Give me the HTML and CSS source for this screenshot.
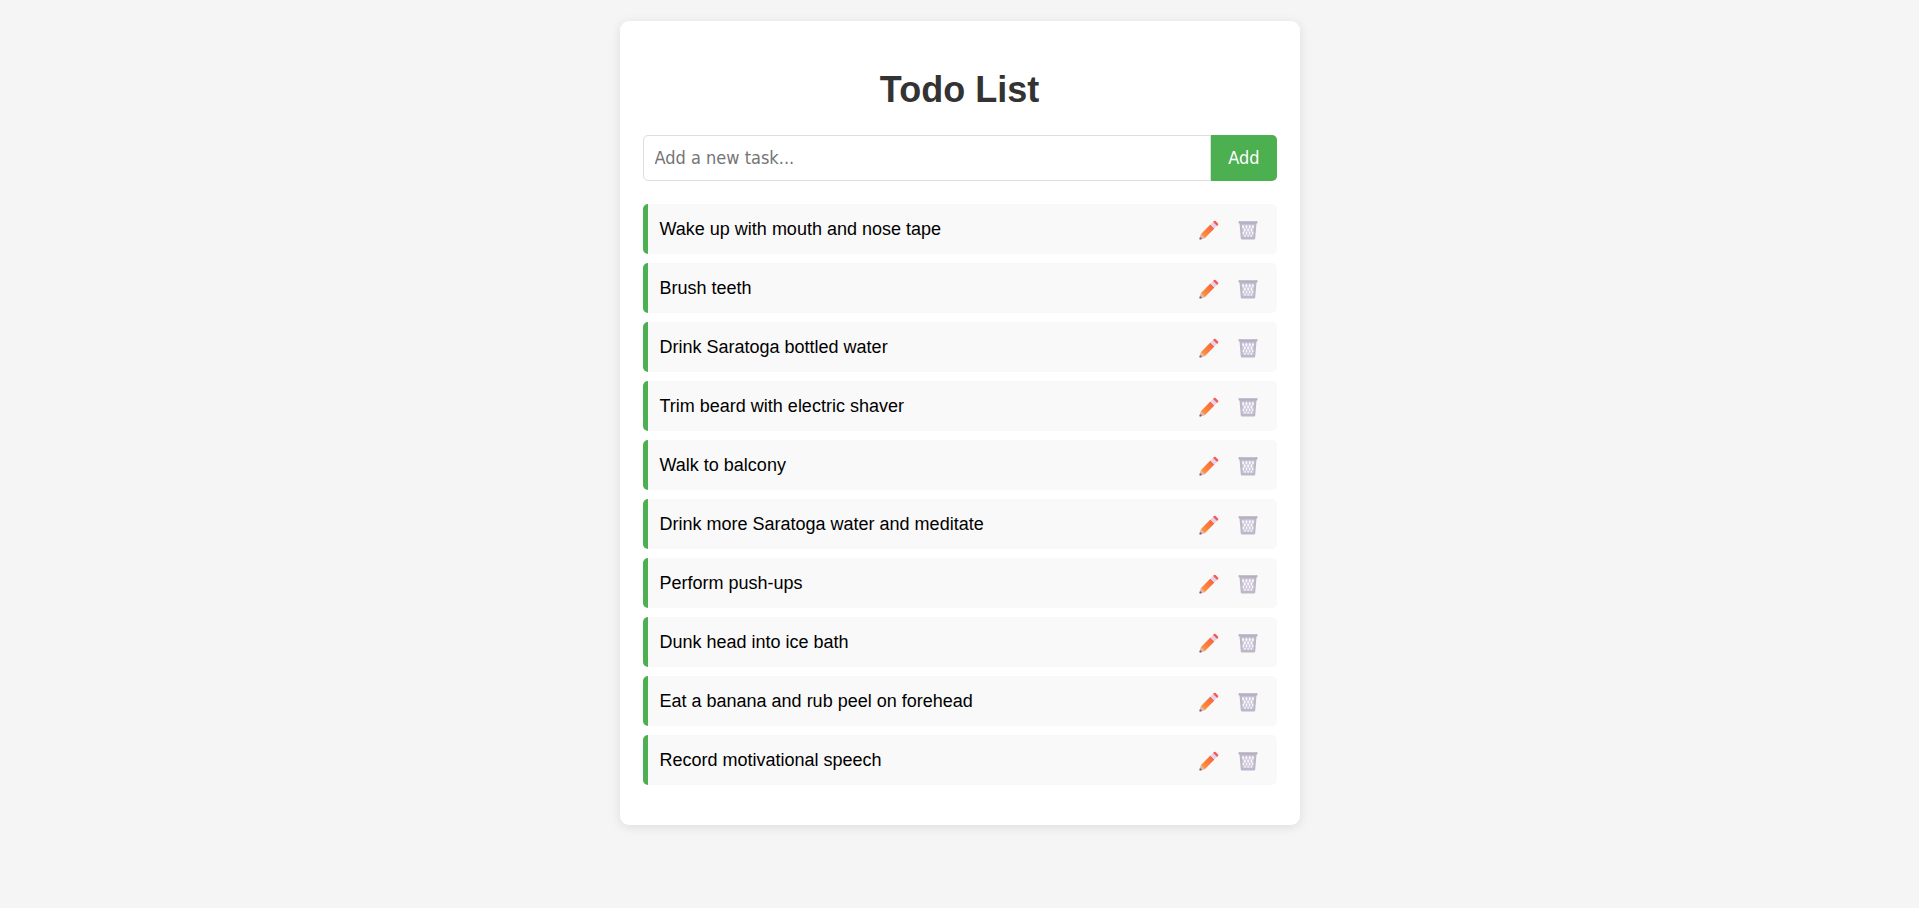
FILE: index.html
```
<!DOCTYPE html>
<html lang="en">
<head>
<meta charset="utf-8">
<meta name="viewport" content="width=device-width, initial-scale=1">
<title>Todo List</title>
<link rel="stylesheet" href="styles.css">
</head>
<body>
<svg class="sprite" aria-hidden="true">
  <defs>
    <linearGradient id="wood" x1="1" y1="0" x2="0" y2="1">
      <stop offset="0.1" stop-color="#f9633c"/>
      <stop offset="0.5" stop-color="#fa7c3a"/>
      <stop offset="0.9" stop-color="#ff963e"/>
    </linearGradient>
  </defs>
  <symbol id="pencil" viewBox="0 0 20 20">
    <path d="M1.8 14.2 11.4 4.6 15.4 8.6 5.8 18.2z" fill="url(#wood)"/>
    <path d="M1.8 14.2 5.8 18.2 1.4 19.5Q.3 19.7.5 18.6z" fill="#dcb3a8"/>
    <path d="M1 17 3 19 1.2 19.5Q.3 19.7.5 18.6z" fill="#7b5570"/>
    <path d="M11.4 4.6 14 2 18 6 15.4 8.6z" fill="#e2d3ee"/>
    <path d="M14 2 15 1Q15.8.3 16.6 1L19 3.4Q19.7 4.2 19 5L18 6z" fill="#fb5850"/>
  </symbol>
  <symbol id="trash" viewBox="0 0 20 20">
    <path d="M1.5 3H18.5L17.2 18.5Q17.1 19.5 16.1 19.5H3.9Q2.9 19.5 2.8 18.5z" fill="#bdb7ca"/>
    <path d="M3.7 4.5H16.3L15.5 17H4.5z" fill="#cbc5d8"/>
    <g fill="#fbfafd">
      <path d="M5 4.5 6.2 6.7 5.2 8.9 4 6.7zM8.4 4.5 9.6 6.7 8.4 8.9 7.2 6.7zM11.8 4.5 13 6.7 11.8 8.9 10.6 6.7zM15 4.5 16 6.7 14.8 8.9 13.8 6.7z"/>
      <path d="M6.8 7.8 7.9 10 6.8 12.2 5.7 10zM10.1 7.8 11.2 10 10.1 12.2 9 10zM13.4 7.8 14.5 10 13.4 12.2 12.3 10z"/>
      <path d="M5.3 11 6.3 13 5.4 15 4.5 13zM8.5 11 9.5 13 8.5 15 7.5 13zM11.7 11 12.7 13 11.7 15 10.7 13zM14.8 11 15.5 13 14.6 15 13.8 13z"/>
      <path d="M7 14.2 7.9 15.7 7 17.2 6.1 15.7zM10.1 14.2 11 15.7 10.1 17.2 9.2 15.7zM13.2 14.2 14.1 15.7 13.2 17.2 12.3 15.7z"/>
    </g>
    <rect x=".5" y="1" width="19" height="2.6" rx="1" fill="#b5afc1"/>
    <rect x="1.5" y="1.2" width="17" height=".9" rx=".4" fill="#cbc6d6"/>
  </symbol>
</svg>
<main class="card">
  <h1 class="title">Todo List</h1>
  <form class="entry">
    <input class="entry-input" type="text" placeholder="Add a new task..." aria-label="New task">
    <button class="entry-add" type="button">Add</button>
  </form>
  <ul class="tasks">
    <li class="task"><span class="task-text">Wake up with mouth and nose tape</span><button class="action" type="button" aria-label="Edit"><svg class="icon"><use href="#pencil"/></svg></button><button class="action" type="button" aria-label="Delete"><svg class="icon"><use href="#trash"/></svg></button></li>
    <li class="task"><span class="task-text">Brush teeth</span><button class="action" type="button" aria-label="Edit"><svg class="icon"><use href="#pencil"/></svg></button><button class="action" type="button" aria-label="Delete"><svg class="icon"><use href="#trash"/></svg></button></li>
    <li class="task"><span class="task-text">Drink Saratoga bottled water</span><button class="action" type="button" aria-label="Edit"><svg class="icon"><use href="#pencil"/></svg></button><button class="action" type="button" aria-label="Delete"><svg class="icon"><use href="#trash"/></svg></button></li>
    <li class="task"><span class="task-text">Trim beard with electric shaver</span><button class="action" type="button" aria-label="Edit"><svg class="icon"><use href="#pencil"/></svg></button><button class="action" type="button" aria-label="Delete"><svg class="icon"><use href="#trash"/></svg></button></li>
    <li class="task"><span class="task-text">Walk to balcony</span><button class="action" type="button" aria-label="Edit"><svg class="icon"><use href="#pencil"/></svg></button><button class="action" type="button" aria-label="Delete"><svg class="icon"><use href="#trash"/></svg></button></li>
    <li class="task"><span class="task-text">Drink more Saratoga water and meditate</span><button class="action" type="button" aria-label="Edit"><svg class="icon"><use href="#pencil"/></svg></button><button class="action" type="button" aria-label="Delete"><svg class="icon"><use href="#trash"/></svg></button></li>
    <li class="task"><span class="task-text">Perform push-ups</span><button class="action" type="button" aria-label="Edit"><svg class="icon"><use href="#pencil"/></svg></button><button class="action" type="button" aria-label="Delete"><svg class="icon"><use href="#trash"/></svg></button></li>
    <li class="task"><span class="task-text">Dunk head into ice bath</span><button class="action" type="button" aria-label="Edit"><svg class="icon"><use href="#pencil"/></svg></button><button class="action" type="button" aria-label="Delete"><svg class="icon"><use href="#trash"/></svg></button></li>
    <li class="task"><span class="task-text">Eat a banana and rub peel on forehead</span><button class="action" type="button" aria-label="Edit"><svg class="icon"><use href="#pencil"/></svg></button><button class="action" type="button" aria-label="Delete"><svg class="icon"><use href="#trash"/></svg></button></li>
    <li class="task"><span class="task-text">Record motivational speech</span><button class="action" type="button" aria-label="Edit"><svg class="icon"><use href="#pencil"/></svg></button><button class="action" type="button" aria-label="Delete"><svg class="icon"><use href="#trash"/></svg></button></li>
  </ul>
</main>
</body>
</html>
```
FILE: styles.css
```
* {
  box-sizing: border-box;
}

body {
  margin: 0;
  padding: 21px;
  background: #f5f5f5;
  color: #000;
  font: 18px/26px "Liberation Sans", Arial, sans-serif;
}

.sprite {
  position: absolute;
  width: 0;
  height: 0;
}

.card {
  max-width: 680px;
  margin: 0 auto;
  padding: 47px 23px 40px;
  background: #fff;
  border-radius: 9px;
  box-shadow: 0 2px 12px rgba(0, 0, 0, 0.1);
}

.title {
  margin: 0 0 23px;
  color: #333;
  font-size: 36px;
  line-height: 44px;
  text-align: center;
}

.entry {
  display: flex;
  margin: 0 0 23px;
}

.entry-input,
.entry-add {
  font: 18px/24px "DejaVu Sans Condensed", "Noto Sans", sans-serif;
}

.entry-input {
  flex: 1;
  min-width: 0;
  padding: 10px 11px;
  border: 1px solid #ddd;
  border-radius: 5px 0 0 5px;
  background: #fff;
}

.entry-input::placeholder {
  color: #757575;
}

.entry-add {
  padding: 0 17px;
  border: 0;
  border-radius: 0 5px 5px 0;
  background: #4caf50;
  color: #fff;
  cursor: pointer;
}

.tasks {
  display: grid;
  gap: 9px;
  margin: 0;
  padding: 0;
  list-style: none;
}

.task {
  display: flex;
  align-items: center;
  padding: 9px 12px;
  border-left: 5px solid #4caf50;
  border-radius: 5px;
  background: #f9f9f9;
}

.task-text {
  flex: 1;
}

.action {
  display: flex;
  padding: 7px 7px 5px;
  margin-left: 5px;
  border: 0;
  background: none;
  cursor: pointer;
}

.icon {
  width: 20px;
  height: 20px;
}
```
